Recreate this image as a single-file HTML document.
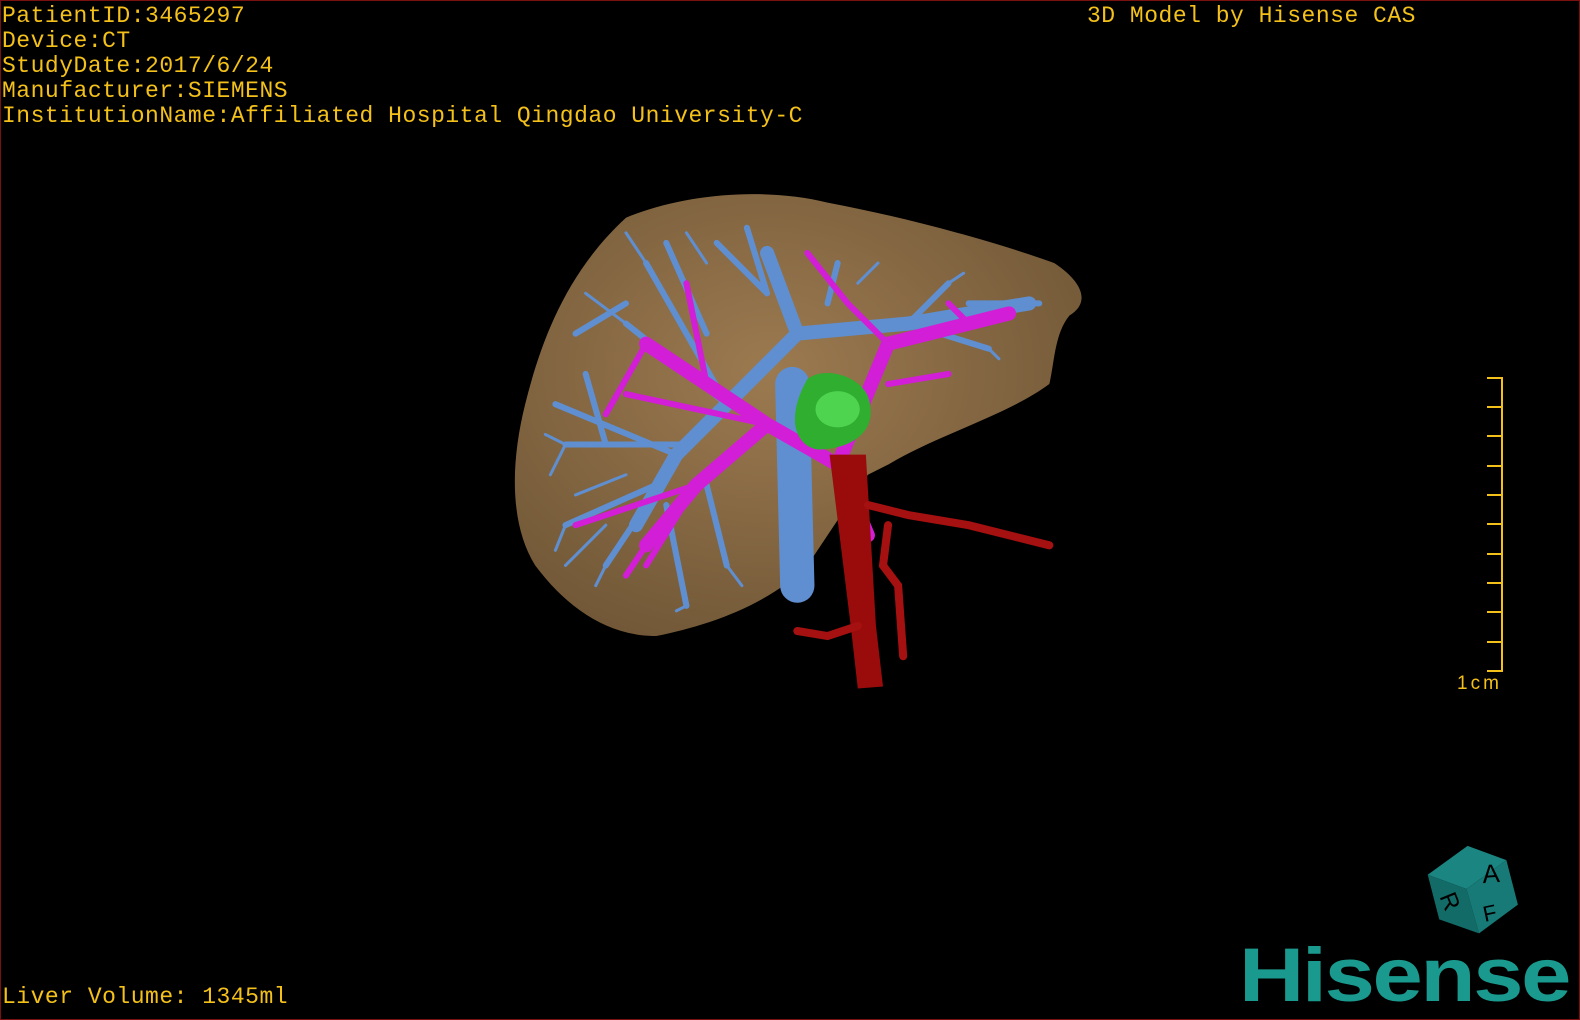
<!DOCTYPE html>
<html><head><meta charset="utf-8"><style>
html,body{margin:0;padding:0;background:#000;}
#v{position:relative;width:1580px;height:1020px;background:#000;overflow:hidden;box-sizing:border-box;border:1px solid #7a1010;}
.t{position:absolute;color:#f4c11a;font-family:"Liberation Mono",monospace;font-size:23px;line-height:25px;white-space:pre;letter-spacing:0.5px;}
</style></head><body><div id="v">
<div class="t" style="left:1px;top:3px">PatientID:3465297
Device:CT
StudyDate:2017/6/24
Manufacturer:SIEMENS
InstitutionName:Affiliated Hospital Qingdao University-C</div>
<div class="t" style="left:1086px;top:3px">3D Model by Hisense CAS</div>
<div class="t" style="left:1px;top:984px">Liver Volume: 1345ml</div>
<div style="position:absolute;left:1456px;top:672px;color:#f4c11a;font-family:'Liberation Sans',sans-serif;font-size:19px;letter-spacing:3px">1cm</div>
<svg width="1580" height="1020" style="position:absolute;left:0;top:0">
<g stroke="#f4c11a" stroke-width="2" fill="none">
<path d="M1486 377H1501V670H1486"/>
<path d="M1486 406H1501M1486 435H1501M1486 465H1501M1486 494H1501M1486 523H1501M1486 553H1501M1486 582H1501M1486 611H1501M1486 641H1501"/>
</g>
<g transform="scale(1.008)">
<defs><radialGradient id="lg" cx="0.45" cy="0.4" r="0.7"><stop offset="0" stop-color="#9c7a50"/><stop offset="1" stop-color="#6e5535"/></radialGradient></defs>
<path d="M620 215 C680 190 760 185 820 200 C900 215 990 240 1045 260 C1075 280 1080 300 1060 312 C1045 330 1045 360 1040 380 C1000 410 930 430 880 460 L860 470 L800 560 C760 600 700 620 650 630 C600 630 560 600 530 560 C505 520 505 460 520 400 C535 340 560 270 620 215Z" fill="url(#lg)"/>
<g stroke="#5f8fd0" stroke-linecap="round" fill="none">
<path stroke-width="34" d="M785 380 L790 580"/>
<path stroke-width="14" d="M790 330 L720 400 L670 450 L630 520 M790 330 L900 320 L1020 300 M790 330 L760 250"/>
<path stroke-width="6" d="M720 400 L620 320 M720 400 L640 260 M700 330 L660 240 M760 290 L710 240 M760 290 L740 225 M680 440 L560 440 M670 450 L550 400 M650 480 L560 520 M640 500 L600 560 M660 500 L680 600 M700 480 L720 560 M900 320 L940 280 M900 320 L980 345 M960 300 L1030 300 M820 300 L830 260 M620 300 L570 330 M600 440 L580 370"/>
<path stroke-width="3" d="M620 320 L580 290 M640 260 L620 230 M560 440 L545 470 M560 520 L550 545 M600 560 L590 580 M680 600 L670 605 M720 560 L735 580 M940 280 L955 270 M980 345 L990 355 M560 440 L540 430 M600 520 L560 560 M620 470 L570 490 M700 260 L680 230 M850 280 L870 260 M930 330 L960 310"/>
</g>
<g stroke="#d21ed6" stroke-linecap="round" fill="none">
<path stroke-width="14" d="M860 530 L830 460 L760 420 L700 380 L640 340 M760 420 L690 480 L640 540 M830 460 L880 340 L1000 310"/>
<path stroke-width="6" d="M700 380 L680 280 M690 480 L600 510 M640 540 L620 570 M880 340 L840 300 L800 250 M760 420 L620 390 M640 340 L600 410 M960 320 L940 300 M880 380 L940 370 M690 480 L640 560 M600 510 L570 520"/>
</g>
<path d="M800 375 C820 360 860 375 862 400 C868 430 840 445 810 445 C785 440 780 410 800 375Z" fill="#2fae2f"/>
<ellipse cx="830" cy="405" rx="22" ry="18" fill="#4fd44f"/>
<path d="M822 450 L858 450 L868 620 L875 680 L850 682 L843 620Z" fill="#9a0c0c"/>
<g stroke="#a51010" stroke-linecap="round" fill="none" stroke-width="8">
<path d="M860 500 L900 510 L960 520 L1000 530 L1040 540"/>
<path d="M880 520 L875 560 L890 580 L895 650"/>
<path d="M850 620 L820 630 L790 625"/>
</g>
</g>
<g transform="translate(1470,885) rotate(-12)">
<polygon points="-40,-20 5,-40 40,-18 -5,2" fill="#1a8581"/>
<polygon points="-40,-20 -5,2 -2,48 -38,26" fill="#136b68"/>
<polygon points="-5,2 40,-18 42,28 -2,48" fill="#177a76"/>
<text x="12" y="-2" font-family="Liberation Sans,sans-serif" font-size="26" fill="#000" transform="rotate(8)">A</text>
<text x="-32" y="18" font-family="Liberation Sans,sans-serif" font-size="24" fill="#000" transform="rotate(80 -24 10)">R</text>
<text x="6" y="38" font-family="Liberation Sans,sans-serif" font-size="22" fill="#000">F</text>
</g>
<text x="1238" y="1000" font-family="Liberation Sans,sans-serif" font-weight="bold" font-size="76" fill="#1a9a8e" letter-spacing="-2" textLength="330" lengthAdjust="spacingAndGlyphs">Hisense</text>
</svg>
</div></body></html>
